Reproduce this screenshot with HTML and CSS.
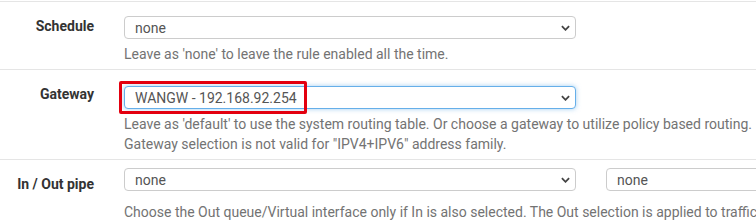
FILE: index.html
```html
<!DOCTYPE html>
<html>
    <head>
        <title>Firewall rule</title>
        <meta charset="UTF-8">
        <meta name="viewport" content="width=device-width, initial-scale=1.0">
        <link rel="stylesheet" href="styles.css">
    </head>
    <body>
        <div class="page">
            <div class="row row-sched">
                <label class="lbl">Schedule</label>
                <div class="ctl">
                    <span class="sel w-main">
                        <select><option>none</option></select>
                        <svg class="chev" viewBox="0 0 10 6"><path d="M1 1l4 4 4-4"/></svg>
                    </span>
                    <p class="help">Leave as 'none' to leave the rule enabled all the time.</p>
                </div>
            </div>
            <div class="row row-gw">
                <label class="lbl">Gateway</label>
                <div class="ctl">
                    <span class="sel w-main focus">
                        <select><option>WANGW - 192.168.92.254</option></select>
                        <svg class="chev" viewBox="0 0 10 6"><path d="M1 1l4 4 4-4"/></svg>
                        <span class="mark"></span>
                    </span>
                    <p class="help">Leave as 'default' to use the system routing table. Or choose a gateway to utilize policy based routing.<br>Gateway selection is not valid for "IPV4+IPV6" address family.</p>
                </div>
            </div>
            <div class="row row-pipe">
                <label class="lbl">In / Out pipe</label>
                <div class="ctl">
                    <div class="pair">
                        <span class="sel w-main">
                            <select><option>none</option></select>
                            <svg class="chev" viewBox="0 0 10 6"><path d="M1 1l4 4 4-4"/></svg>
                        </span>
                        <span class="sel w-main">
                            <select><option>none</option></select>
                            <svg class="chev" viewBox="0 0 10 6"><path d="M1 1l4 4 4-4"/></svg>
                        </span>
                    </div>
                    <p class="help">Choose the Out queue/Virtual interface only if In is also selected. The Out selection is applied to traffic leaving the interface where the rule is created, the In selection is applied to traffic coming into the chosen interface.</p>
                </div>
            </div>
        </div>
    </body>
</html>
```

FILE: styles.css
```css
html, body{
    margin: 0;
    background: #fff;
    overflow: hidden;
}
body{
    padding-top: 1px;
    font-family: Roboto, "Liberation Sans", sans-serif;
    font-size: 14px;
    color: #333;
}
.page{
    width: 1100px;
}
.row{
    display: grid;
    grid-template-columns: 94px 1fr;
    column-gap: 30px;
    border-top: 1px solid #e5e5e5;
    padding-bottom: 5px;
}
.lbl{
    font-weight: bold;
    text-align: right;
    line-height: 20px;
    padding-top: 14px;
    white-space: nowrap;
}
.row-sched .ctl{ padding-top: 14px; }
.row-gw .ctl{ padding-top: 16px; }
.row-pipe .ctl{ padding-top: 8px; }

.sel{
    position: relative;
    display: inline-block;
    vertical-align: top;
}
.w-main{ width: 452px; }
.sel select{
    -webkit-appearance: none;
    appearance: none;
    width: 100%;
    height: 23px;
    box-sizing: border-box;
    border: 1px solid #ccc;
    border-radius: 4px;
    background: #fff;
    padding: 0 10px;
    font-family: Roboto, "Liberation Sans", sans-serif;
    font-size: 14px;
    color: #555;
    outline: none;
}
.focus select{
    border-color: #66afe9;
    box-shadow: 0 0 5px rgba(102, 175, 233, .6);
}
.chev{
    position: absolute;
    right: 6px;
    top: 9px;
    width: 9px;
    height: 6px;
    fill: none;
    stroke: #444;
    stroke-width: 2;
}
.mark{
    position: absolute;
    left: -5px;
    top: -5px;
    width: 182px;
    height: 27px;
    border: 3px solid #e3000f;
    border-radius: 2px;
}
.pair{
    display: flex;
    gap: 30px;
}
.help{
    margin: 5px 0 0;
    line-height: 20px;
    color: #737373;
    white-space: nowrap;
}
.row-pipe .help{ margin-top: 11px; }
```
